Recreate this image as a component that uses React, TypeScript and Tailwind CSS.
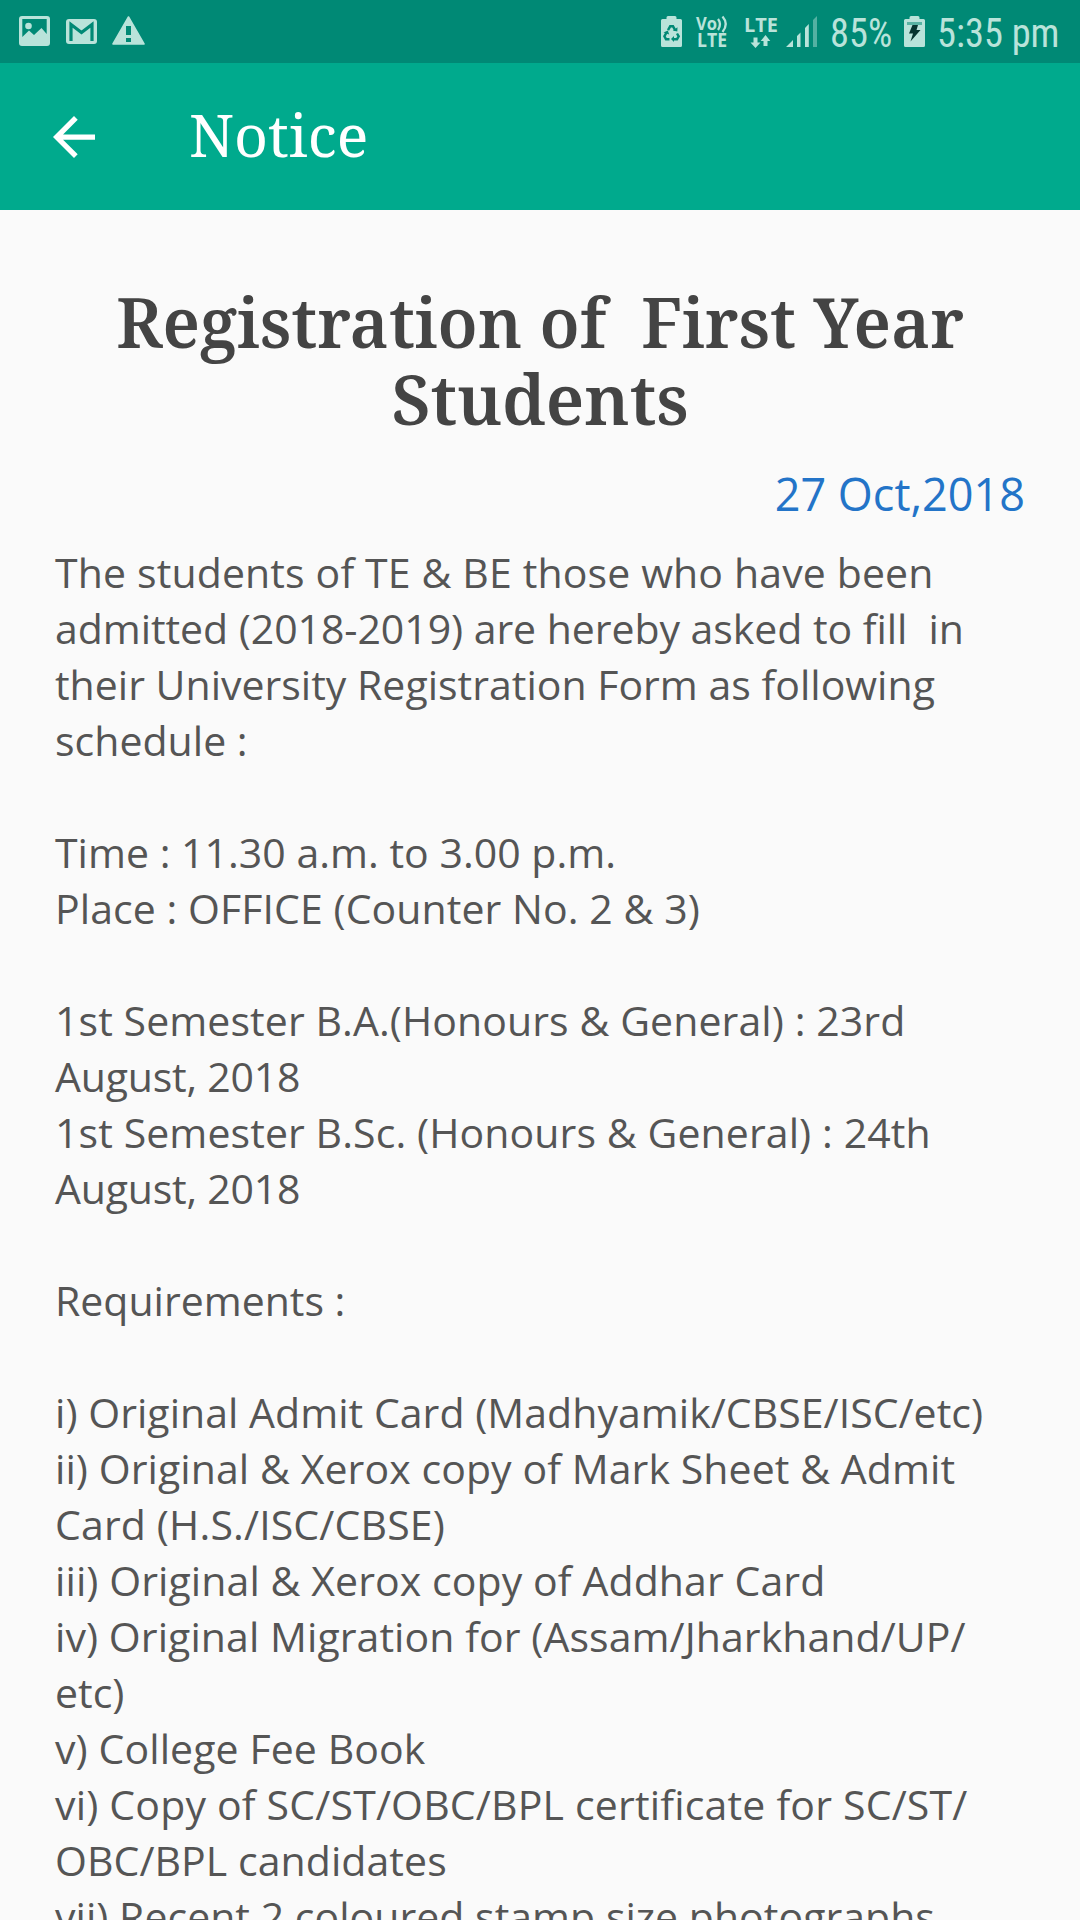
import React from "react";

const TINT = "#b9e3da";

const PictureIcon = () => (
  <svg className="ml-[19px] h-[30px] w-[31px] shrink-0" viewBox="0 0 31 30" fill={TINT}>
    <path
      fillRule="evenodd"
      d="M3 0H28Q31 0 31 3V27Q31 30 28 30H3Q0 30 0 27V3Q0 0 3 0ZM3.3 3V21L10 14.5L15 19L22.5 12L27.7 18V3Z"
    />
    <circle cx="9.5" cy="10" r="3.3" />
  </svg>
);

const MailIcon = () => (
  <svg className="ml-[16px] h-[25px] w-[31px] shrink-0" viewBox="0 0 31 25">
    <rect width="31" height="25" rx="3" fill={TINT} />
    <path d="M5 22V5.5L15.5 13.5L26 5.5V22" fill="none" stroke="#008975" strokeWidth="3.2" />
  </svg>
);

const WarningIcon = () => (
  <svg className="ml-[15px] h-[29px] w-[33px] shrink-0" viewBox="0 0 33 29">
    <path d="M16.5 1L32 28H1Z" fill={TINT} stroke={TINT} strokeWidth="1.6" strokeLinejoin="round" />
    <path d="M14 10H19V19H14ZM14 22H19V26H14Z" fill="#008975" />
  </svg>
);

const RecycleBatteryIcon = () => (
  <svg className="h-[31px] w-[21px] shrink-0" viewBox="0 0 21 31">
    <path d="M7 0H14Q15.5 0 15.5 1.5V3H19.5Q21 3 21 4.500V29.500Q21 31 19.500 31H1.500Q0 31 0 29.500V4.500Q0 3 1.500 3H5.500V1.500Q5.500 0 7 0Z" fill={TINT} />
    <g fill="none" stroke="#008975" strokeWidth="2.400">
      <path d="M7 14.200L9.200 10.300H12L14.300 14.300" />
      <path d="M5.500 16.500L3.400 20.300L5 23.200H8.500" />
      <path d="M16 17.500L17.700 20.300L16 23.200H12.500" />
    </g>
    <g fill="#008975">
      <path d="M11.800 14.600L16.300 15.600L16.500 11.200Z" />
      <path d="M2.500 16.600L6.800 14.500L8.200 18.500Z" />
      <path d="M13 19.900V26L10 23Z" />
    </g>
  </svg>
);

const VoLteIcon = () => (
  <svg className="ml-[14px] h-[35px] w-[34px] shrink-0 overflow-visible" viewBox="0 0 34 35" fill={TINT}>
    <text x="0" y="13.5" fontFamily="Open Sans" fontWeight="700" fontSize="18.500" textLength="21" lengthAdjust="spacingAndGlyphs">Vo</text>
    <path d="M22 3Q26 8 22 14M26.500 0.500Q33 8 26.500 16" fill="none" stroke={TINT} strokeWidth="2.300" />
    <text x="1" y="31" fontFamily="Open Sans" fontWeight="700" fontSize="19" textLength="30" lengthAdjust="spacingAndGlyphs">LTE</text>
  </svg>
);

const LteIcon = () => (
  <svg className="ml-[14px] h-[33px] w-[34px] shrink-0 overflow-visible" viewBox="0 0 34 33" fill={TINT}>
    <text x="0" y="15.500" fontFamily="Open Sans" fontWeight="700" fontSize="20" textLength="34" lengthAdjust="spacingAndGlyphs">LTE</text>
    <path d="M9.500 21.500H13.500V26.500H16.500L11.500 32L6.500 26.500H9.500ZM19.500 30V25H16.700L21.500 19L26.300 25H23.500V30Z" />
  </svg>
);

const SignalIcon = () => (
  <svg className="ml-[8px] h-[32px] w-[31px] shrink-0" viewBox="0 0 31 32" fill={TINT}>
    <path d="M0 31L7 24V31ZM11 20L14.500 16.500V31H11ZM19 12L22.800 8V31H19Z" />
    <path d="M27 4L31 0V31H27Z" opacity="0.450" />
  </svg>
);

const ChargingIcon = () => (
  <svg className="h-[31px] w-[21px] shrink-0" viewBox="0 0 21 31">
    <path d="M7 0H14Q15.500 0 15.500 1.500V3H19.500Q21 3 21 4.500V29.500Q21 31 19.500 31H1.500Q0 31 0 29.500V4.500Q0 3 1.500 3H5.500V1.500Q5.500 0 7 0Z" fill={TINT} />
    <path d="M3 6H18V9H3Z" fill="#58b3a3" />
    <path d="M8.500 9H14L12.500 14H16.500L6.500 25.500L9 17.500H5Z" fill="#06342f" />
  </svg>
);

// Each entry holds a line of the notice and its tracking in pixels.
const bodyLines: [string, number][] = [
  ["The students of TE & BE those who have been", 0.14],
  ["admitted (2018-2019) are hereby asked to fill  in", -0.05],
  ["their University Registration Form as following", 0.01],
  ["schedule :", 0.03],
  ["", 0],
  ["Time : 11.30 a.m. to 3.00 p.m.", 0.02],
  ["Place : OFFICE (Counter No. 2 & 3)", 0.07],
  ["", 0],
  ["1st Semester B.A.(Honours & General) : 23rd", 0.09],
  ["August, 2018", -0.2],
  ["1st Semester B.Sc. (Honours & General) : 24th", 0.1],
  ["August, 2018", -0.2],
  ["", 0],
  ["Requirements :", 0],
  ["", 0],
  ["i) Original Admit Card (Madhyamik/CBSE/ISC/etc)", 0.04],
  ["ii) Original & Xerox copy of Mark Sheet & Admit", 0.08],
  ["Card (H.S./ISC/CBSE)", 0.15],
  ["iii) Original & Xerox copy of Addhar Card", 0.09],
  ["iv) Original Migration for (Assam/Jharkhand/UP/", 0.07],
  ["etc)", 0],
  ["v) College Fee Book", 0.1],
  ["vi) Copy of SC/ST/OBC/BPL certificate for SC/ST/", 0.18],
  ["OBC/BPL candidates", 0.07],
  ["vii) Recent 2 coloured stamp size photographs", 0.03],
];

export default function App() {
  return (
    <div className="flex h-[1920px] w-[1080px] flex-col overflow-hidden bg-[#fafafa] font-['Open_Sans',sans-serif]">
      <div className="flex h-[63px] shrink-0 items-start bg-[#008975] pt-[16px]">
        <PictureIcon />
        <div className="pt-[3px]"><MailIcon /></div>
        <WarningIcon />
        <div className="ml-[516px] flex items-start">
          <RecycleBatteryIcon />
          <VoLteIcon />
          <LteIcon />
          <SignalIcon />
          <span className="ml-[13px] w-[61px] origin-left scale-x-[0.96] whitespace-nowrap pt-px font-['Roboto',sans-serif] text-[40px] leading-[34px] text-[#b9e3da] [font-stretch:75%]">85%</span>
          <span className="ml-[13px]"><ChargingIcon /></span>
          <span className="ml-[12px] w-[124px] origin-left scale-x-[0.96] whitespace-nowrap pt-px font-['Roboto',sans-serif] text-[40px] leading-[34px] text-[#b9e3da] [font-stretch:75%]">5:35 pm</span>
        </div>
      </div>
      <header className="flex h-[147px] shrink-0 items-center bg-[#00aa8d]">
        <svg className="ml-[53px] h-[42px] w-[42px]" viewBox="0 0 16 16" fill="#fff">
          <path d="M16 7H3.830L9.420 1.410L8 0L0 8L8 16L9.410 14.590L3.830 9H16Z" />
        </svg>
        <h1 className="ml-[94px] mb-[6px] whitespace-nowrap font-['Noto_Serif',serif] text-[59px] leading-[70px] text-white">Notice</h1>
      </header>
      <main className="flex flex-col px-[55px] pt-[73px]">
        <h2 className="flex flex-col items-center whitespace-pre font-['Noto_Serif',serif] text-[70px] font-semibold leading-[77px] text-[#444444]">
          <span className="scale-x-[0.959]">Registration of  First Year</span>
          <span className="scale-x-[0.984]">Students</span>
        </h2>
        <p className="mt-[25px] text-right text-[45px] leading-[64px] text-[#2374c8]">27 Oct,2018</p>
        <div className="mt-[18px] whitespace-pre text-[41px] leading-[56px] text-[#555555]">
          {bodyLines.map(([line, tracking], i) => (
            <p key={i} className="h-[56px]" style={{ letterSpacing: tracking }}>{line}</p>
          ))}
        </div>
      </main>
    </div>
  );
}
